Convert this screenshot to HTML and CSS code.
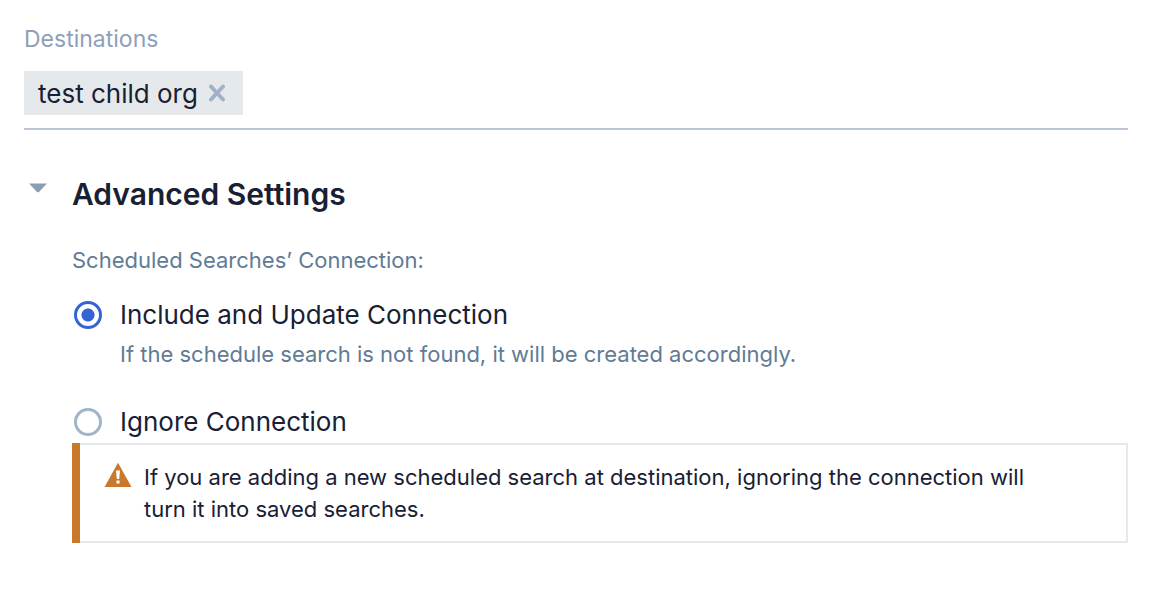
FILE: index.html
```html
<!DOCTYPE html>
<html lang="en">
<head>
<meta charset="utf-8">
<title>Destinations</title>
<link rel="stylesheet" href="styles.css">
</head>
<body>
<form class="panel">
  <section class="destinations">
    <h2 class="field-label">Destinations</h2>
    <div class="tag-field">
      <span class="tag">test child org
        <button class="tag-remove" type="button" aria-label="Remove test child org">
          <svg width="16" height="18" viewBox="0 0 16 18"><path d="M2 2.500 14 15.500M14 2.500 2 15.500" fill="none" stroke="currentColor" stroke-width="4" stroke-linecap="round"/></svg>
        </button>
      </span>
    </div>
  </section>
  <section class="advanced">
    <button class="toggle" type="button" aria-label="Collapse advanced settings" aria-expanded="true">
      <svg width="18" height="10" viewBox="0 0 18 10"><path d="M0 .5H18L10 8.900Q9 9.700 8 8.900Z" fill="currentColor"/></svg>
    </button>
    <div class="advanced-body">
      <h1 class="title">Advanced Settings</h1>
      <fieldset class="options">
        <legend class="legend">Scheduled Searches’ Connection:</legend>
        <div class="option">
          <input class="radio" type="radio" name="connection" id="include" aria-describedby="include-hint" checked>
          <label class="option-label" for="include">Include and Update Connection</label>
          <p class="hint" id="include-hint">If the schedule search is not found, it will be created accordingly.</p>
        </div>
        <div class="option">
          <input class="radio" type="radio" name="connection" id="ignore">
          <label class="option-label" for="ignore">Ignore Connection</label>
        </div>
      </fieldset>
      <div class="warning" role="note">
        <div class="warning-content">
          <svg class="warning-icon" width="28" height="26" viewBox="0 0 28 26"><path d="M14 .8 27.500 25H.5Z" fill="#c9782c"/><path d="M12 8.500H16L15.200 17H12.800ZM12.500 18.500H15.500V21.500H12.500Z" fill="#fff"/></svg>
          <p class="warning-text">If you are adding a new scheduled search at destination, ignoring the connection will turn it into saved searches.</p>
        </div>
      </div>
    </div>
  </section>
</form>
</body>
</html>
```
FILE: styles.css
```css
* { box-sizing: border-box; }
body { margin: 0; background: #fff; color: #182034; font-family: Inter, "Liberation Sans", sans-serif; }
h1, h2, p { margin: 0; font-weight: 400; }
button { padding: 0; border: 0; background: none; cursor: pointer; }
svg { display: block; }
.panel { padding: 23px 36px 24px 24px; }
.field-label { font-size: 23px; line-height: 32px; color: #8e9fb8; }
.tag-field { display: flex; margin-top: 16px; padding-bottom: 13px; border-bottom: 2px solid #b9c7d9; }
.tag { display: flex; align-items: center; gap: 11px; height: 44px; padding: 0 18px 0 14px; background: #e6e9ec; font-size: 26px; }
.tag-remove { color: #a1b2c6; }
.advanced { display: flex; margin-top: 44px; }
.toggle { flex: none; width: 48px; height: 28px; padding: 9px 5px; color: #8d9db6; }
.advanced-body { flex: 1; min-width: 0; }
.title { font-size: 30px; line-height: 40px; font-weight: 600; }
.options { margin: 30px 0 0; padding: 0; border: 0; }
.legend { padding: 0; font-size: 22px; line-height: 32px; color: #5f7b95; }
.option { display: grid; grid-template-columns: 48px 1fr; align-items: center; margin-top: 20px; }
.option + .option { margin-top: 33px; }
.radio { appearance: none; width: 28px; height: 28px; margin: 0 2px; border: 3px solid #a1b4c8; border-radius: 50%; }
.radio:checked { border-color: #3464d4; background: radial-gradient(circle, #3464d4 6px, #fff 7px); }
.option-label { font-size: 26px; line-height: 38px; }
.hint { grid-column: 2; margin-top: 4px; font-size: 22px; line-height: 32px; color: #5f7b95; }
.warning { margin-top: 2px; border-left: 8px solid #c9782c; }
.warning-content { display: flex; gap: 12px; padding: 16px 96px 16px 24px; border: 2px solid #e5e9ed; border-left: 0; }
.warning-icon { flex: none; margin-top: 1px; }
.warning-text { font-size: 22px; line-height: 32px; }
```
